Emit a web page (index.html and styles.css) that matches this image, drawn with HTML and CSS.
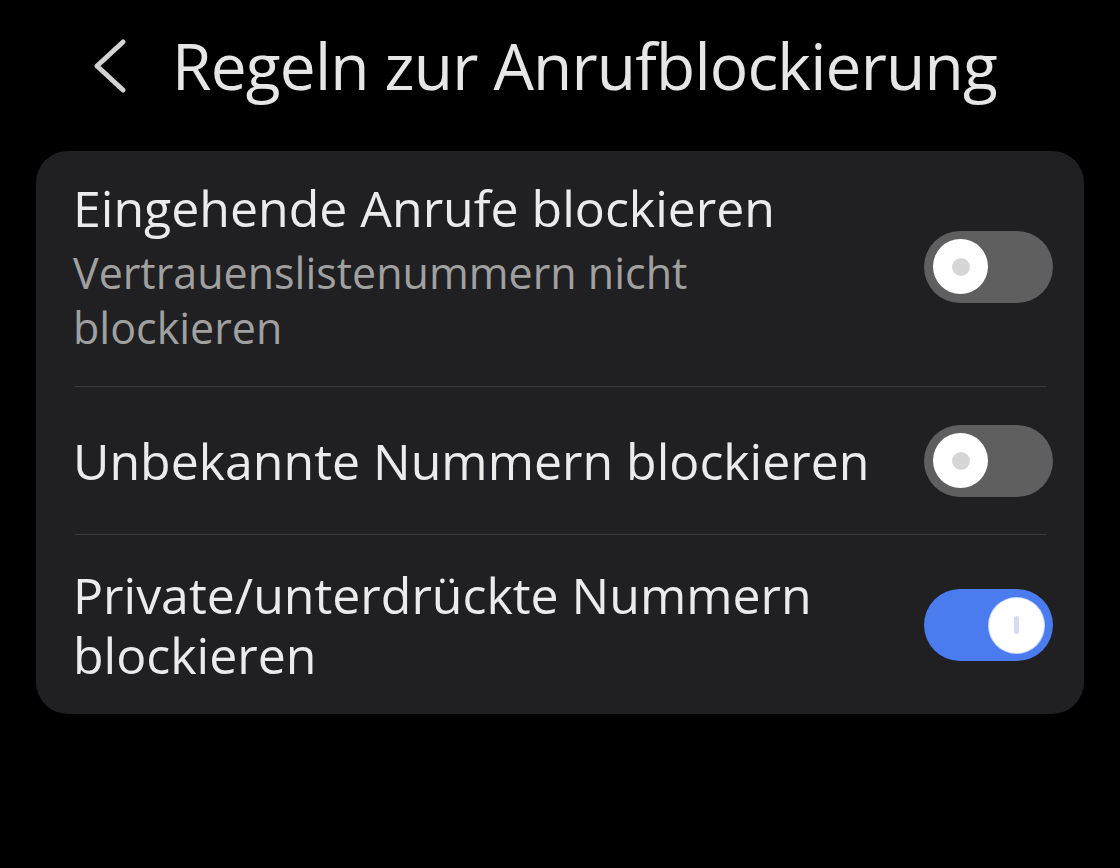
FILE: index.html
```html
<!DOCTYPE html>
<html lang="de">
<head>
<meta charset="utf-8">
<title>Regeln zur Anrufblockierung</title>
<link rel="stylesheet" href="styles.css">
</head>
<body>
<header class="appbar">
  <svg class="back" viewBox="0 0 36 56" width="36" height="56" aria-hidden="true">
    <polyline points="31,4 5,28 31,52" fill="none" stroke="#d2d2d2" stroke-width="5" stroke-linecap="round" stroke-linejoin="round"/>
  </svg>
  <h1 class="title">Regeln zur Anrufblockierung</h1>
</header>
<main class="card">
  <div class="row row-first">
    <div class="text">
      <div class="label">Eingehende Anrufe blockieren</div>
      <div class="sub">Vertrauenslistenummern nicht blockieren</div>
    </div>
    <div class="switch"><span class="thumb"><span class="dot"></span></span></div>
  </div>
  <div class="divider"></div>
  <div class="row">
    <div class="text">
      <div class="label">Unbekannte Nummern blockieren</div>
    </div>
    <div class="switch"><span class="thumb"><span class="dot"></span></span></div>
  </div>
  <div class="divider"></div>
  <div class="row row-last">
    <div class="text">
      <div class="label">Private/unterdrückte Nummern blockieren</div>
    </div>
    <div class="switch switch-on"><span class="thumb"><span class="bar"></span></span></div>
  </div>
</main>
</body>
</html>
```
FILE: styles.css
```css
html, body {
  margin: 0;
  padding: 0;
  background: #000;
}
body {
  font-family: "Open Sans", "Noto Sans", sans-serif;
  width: 1120px;
  height: 868px;
  overflow: hidden;
}
.appbar {
  display: flex;
  align-items: center;
  padding: 33px 0 0 92px;
  height: 66px;
}
.back {
  display: block;
  flex: none;
}
.title {
  margin: 0 0 0 44px;
  font-size: 64px;
  line-height: 66px;
  letter-spacing: -0.8px;
  font-weight: 400;
  color: #e6e6e6;
  white-space: nowrap;
}
.card {
  margin: 52px 0 0 36px;
  width: 1048px;
  background: #202022;
  border-radius: 32px;
  overflow: hidden;
}
.row {
  display: flex;
  align-items: center;
  gap: 40px;
  box-sizing: border-box;
  min-height: 147px;
  padding: 30px 31px 30px 37px;
}
.row-first {
  padding-top: 27px;
  padding-bottom: 31px;
}
.row-last {
  padding-bottom: 29px;
}
.text {
  flex: 1;
  min-width: 0;
}
.label {
  font-size: 50px;
  line-height: 60px;
  color: #ebebeb;
}
.sub {
  margin-top: 7px;
  font-size: 43px;
  line-height: 55px;
  color: #a0a0a0;
}
.divider {
  height: 1px;
  background: #3a3a3c;
  margin: 0 38px 0 39px;
}
.switch {
  flex: none;
  width: 129px;
  height: 72px;
  border-radius: 36px;
  background: #5f5f5f;
  box-sizing: border-box;
  padding: 0 9px;
  display: flex;
  align-items: center;
  justify-content: flex-start;
}
.switch-on {
  background: #4a7cf0;
  justify-content: flex-end;
}
.thumb {
  width: 55px;
  height: 55px;
  border-radius: 50%;
  background: #fff;
  display: flex;
  align-items: center;
  justify-content: center;
}
.switch-on .thumb {
  box-shadow: 0 0 0 1px #c9d7fa;
}
.dot {
  width: 18px;
  height: 18px;
  border-radius: 50%;
  background: #d6d6d6;
}
.bar {
  width: 5px;
  height: 18px;
  border-radius: 3px;
  background: #d3dcf2;
}
```
